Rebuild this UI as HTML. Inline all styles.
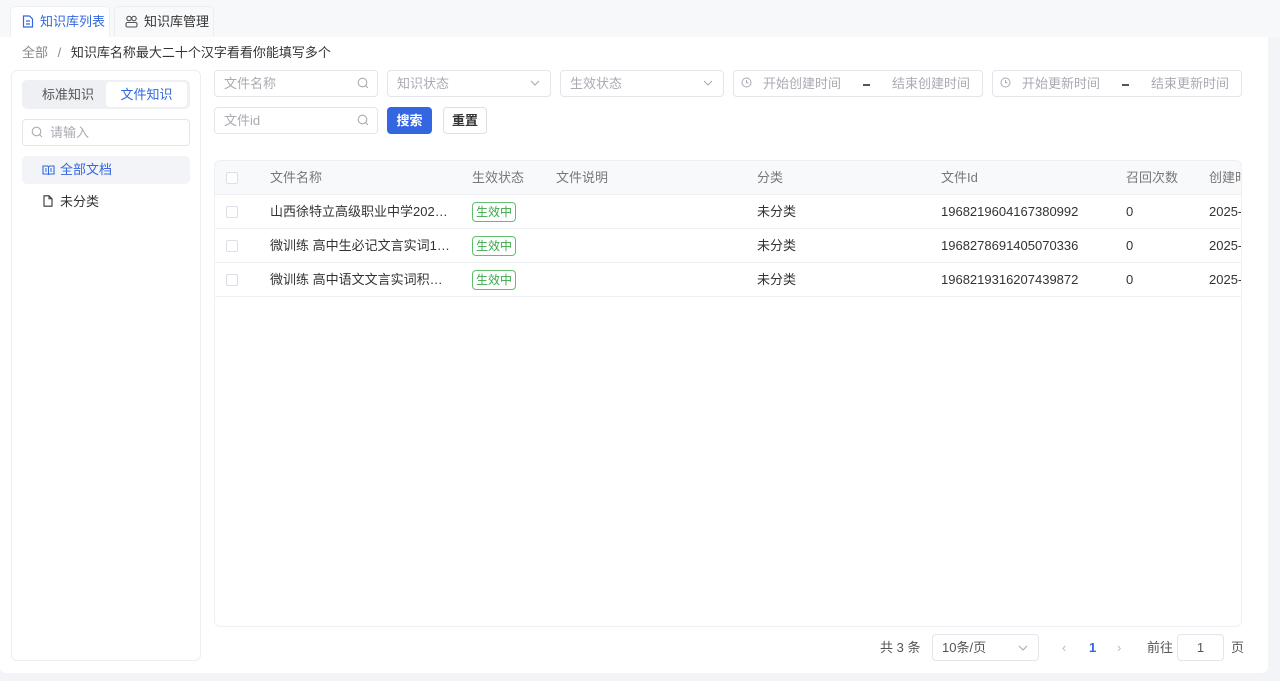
<!DOCTYPE html>
<html><head><meta charset="utf-8"><style>
*{box-sizing:border-box;margin:0;padding:0}
body{width:1280px;height:681px;overflow:hidden;background:#f3f4f7;font-family:"Liberation Sans","Noto Sans CJK SC",sans-serif;font-size:13px;color:#333;position:relative}
.a{position:absolute}
.inp{position:absolute;height:27px;border:1px solid #e3e5ea;border-radius:4px;background:#fff;color:#a8abb2;font-size:13px;line-height:25px;padding-left:9px}
.row{position:absolute;left:0;width:1027px;height:34px;border-bottom:1px solid #eef0f3}
.cell{position:absolute;top:0;line-height:34px;white-space:nowrap}
.nm{width:182px;overflow:hidden;text-overflow:ellipsis}
.cb{position:absolute;left:11px;top:11px;width:12px;height:12px;border:1px solid #dcdfe6;border-radius:2px;background:#fff}
.tag{position:absolute;left:257px;top:7px;width:44px;height:20px;border:1px solid #5fbf6b;border-radius:4px;color:#3aa84a;font-size:12px;line-height:18px;text-align:center}
.dash{display:inline-block;width:7px;height:2px;background:#555;vertical-align:middle;margin:0 22px}
</style></head><body>
<div class="a" style="left:0;top:0;width:1280px;height:37px;background:#f7f8fa"></div>
<div class="a" style="left:10px;top:6px;width:100px;height:32px;background:#fff;border:1px solid #eceef2;border-bottom:none;border-radius:5px 5px 0 0;color:#3366e0;line-height:30px;padding-left:29px">知识库列表</div>
<svg class="a" style="left:22px;top:15px" width="12" height="13" viewBox="0 0 12 13"><path d="M1.5 1h6l3 3v8h-9z" fill="none" stroke="#3366e0" stroke-width="1.2"/><path d="M4 6h4M4 9h4" stroke="#3366e0" stroke-width="1.2"/></svg>
<div class="a" style="left:114px;top:6px;width:100px;height:31px;background:#f8f9fb;border:1px solid #eceef2;border-bottom:none;border-radius:5px 5px 0 0;color:#333;line-height:30px;padding-left:29px">知识库管理</div>
<svg class="a" style="left:125px;top:15px" width="13" height="13" viewBox="0 0 13 13"><circle cx="4" cy="3.5" r="2.2" fill="none" stroke="#555" stroke-width="1.1"/><circle cx="9" cy="3.5" r="2.2" fill="none" stroke="#555" stroke-width="1.1"/><rect x="1" y="7.5" width="11" height="4.5" rx="1.5" fill="none" stroke="#555" stroke-width="1.1"/></svg>

<div class="a" style="left:0;top:37px;width:1268px;height:636px;background:#fff;border-radius:0 0 6px 6px"></div>
<div class="a" style="left:22px;top:45px;line-height:16px;color:#888">全部 <span style="margin:0 6px">/</span> <span style="color:#333">知识库名称最大二十个汉字看看你能填写多个</span></div>

<div class="a" style="left:11px;top:70px;width:190px;height:591px;border:1px solid #eceef2;border-radius:6px"></div>
<div class="a" style="left:22px;top:80px;width:168px;height:29px;background:#eef0f3;border-radius:5px"></div>
<div class="a" style="left:42px;top:80px;line-height:29px;color:#555">标准知识</div>
<div class="a" style="left:106px;top:82px;width:81px;height:25px;background:#fff;border-radius:4px;color:#3366e0;line-height:25px;text-align:center">文件知识</div>
<div class="inp" style="left:22px;top:119px;width:168px;padding-left:27px">请输入</div>
<svg class="a" style="left:31px;top:126px" width="12" height="12" viewBox="0 0 12 12"><circle cx="5.5" cy="5.5" r="4.3" fill="none" stroke="#a8abb2" stroke-width="1.1"/><path d="M8.6 8.6l2.4 2.4" stroke="#a8abb2" stroke-width="1.1"/></svg>
<div class="a" style="left:22px;top:156px;width:168px;height:28px;background:#f2f4f8;border-radius:5px;color:#3366e0;line-height:28px;padding-left:38px">全部文档</div>
<svg class="a" style="left:42px;top:165px" width="13" height="10" viewBox="0 0 13 10"><path d="M1 1h4.5l1 1 1-1H12v8H7.5l-1 .5-1-.5H1z" fill="none" stroke="#3366e0" stroke-width="1.1"/><path d="M6.5 2v7M3 4h2M3 6h2M8 4h2M8 6h2" stroke="#3366e0" stroke-width="1"/></svg>
<div class="a" style="left:60px;top:193px;line-height:17px;color:#333">未分类</div>
<svg class="a" style="left:43px;top:195px" width="10" height="12" viewBox="0 0 10 12"><path d="M1 .8h5l3 3v7.4H1z" fill="none" stroke="#333" stroke-width="1.1"/><path d="M6 .8v3h3" fill="none" stroke="#333" stroke-width="1"/></svg>

<!-- filters -->
<div class="inp" style="left:214px;top:70px;width:164px">文件名称</div>
<div class="inp" style="left:387px;top:70px;width:164px">知识状态</div>
<div class="inp" style="left:560px;top:70px;width:164px">生效状态</div>
<div class="inp" style="left:733px;top:70px;width:250px;padding-left:29px">开始创建时间<span class="dash"></span>结束创建时间</div>
<div class="inp" style="left:992px;top:70px;width:250px;padding-left:29px">开始更新时间<span class="dash"></span>结束更新时间</div>
<svg class="a" style="left:357px;top:77px" width="12" height="12" viewBox="0 0 12 12"><circle cx="5.5" cy="5.5" r="4.3" fill="none" stroke="#a8abb2" stroke-width="1.1"/><path d="M8.6 8.6l2.4 2.4" stroke="#a8abb2" stroke-width="1.1"/></svg>
<svg class="a" style="left:530px;top:80px" width="10" height="6" viewBox="0 0 10 6"><path d="M1 1l4 4 4-4" fill="none" stroke="#a8abb2" stroke-width="1.1"/></svg>
<svg class="a" style="left:703px;top:80px" width="10" height="6" viewBox="0 0 10 6"><path d="M1 1l4 4 4-4" fill="none" stroke="#a8abb2" stroke-width="1.1"/></svg>
<svg class="a" style="left:741px;top:77px" width="11" height="11" viewBox="0 0 11 11"><circle cx="5.5" cy="5.5" r="4.5" fill="none" stroke="#a8abb2"/><path d="M5.5 3v2.7h2" fill="none" stroke="#a8abb2"/></svg>
<svg class="a" style="left:1000px;top:77px" width="11" height="11" viewBox="0 0 11 11"><circle cx="5.5" cy="5.5" r="4.5" fill="none" stroke="#a8abb2"/><path d="M5.5 3v2.7h2" fill="none" stroke="#a8abb2"/></svg>
<div class="inp" style="left:214px;top:107px;width:164px">文件id</div>
<svg class="a" style="left:357px;top:114px" width="12" height="12" viewBox="0 0 12 12"><circle cx="5.5" cy="5.5" r="4.3" fill="none" stroke="#a8abb2" stroke-width="1.1"/><path d="M8.6 8.6l2.4 2.4" stroke="#a8abb2" stroke-width="1.1"/></svg>
<div class="a" style="left:387px;top:107px;width:45px;height:27px;background:#3366e0;border-radius:4px;color:#fff;font-weight:bold;line-height:27px;text-align:center">搜索</div>
<div class="a" style="left:443px;top:107px;width:44px;height:27px;border:1px solid #dcdfe6;border-radius:4px;color:#333;font-weight:bold;line-height:25px;text-align:center">重置</div>

<!-- table -->
<div class="a" style="left:214px;top:160px;width:1028px;height:467px;border:1px solid #eef0f3;border-radius:6px;overflow:hidden">
 <div class="row" style="top:0;background:#f8f9fb;color:#777">
  <div class="cb"></div>
  <div class="cell" style="left:55px">文件名称</div><div class="cell" style="left:257px">生效状态</div><div class="cell" style="left:341px">文件说明</div><div class="cell" style="left:542px">分类</div><div class="cell" style="left:726px">文件Id</div><div class="cell" style="left:911px">召回次数</div><div class="cell" style="left:994px">创建时间</div>
 </div>
 <div class="row" style="top:34px"><div class="cb"></div><div class="cell nm" style="left:55px">山西徐特立高级职业中学2025年…</div><div class="tag">生效中</div><div class="cell" style="left:542px">未分类</div><div class="cell" style="left:726px">1968219604167380992</div><div class="cell" style="left:911px">0</div><div class="cell" style="left:994px">2025-</div></div>
 <div class="row" style="top:68px"><div class="cb"></div><div class="cell nm" style="left:55px">微训练 高中生必记文言实词100…</div><div class="tag">生效中</div><div class="cell" style="left:542px">未分类</div><div class="cell" style="left:726px">1968278691405070336</div><div class="cell" style="left:911px">0</div><div class="cell" style="left:994px">2025-</div></div>
 <div class="row" style="top:102px"><div class="cb"></div><div class="cell nm" style="left:55px">微训练 高中语文文言实词积累与…</div><div class="tag">生效中</div><div class="cell" style="left:542px">未分类</div><div class="cell" style="left:726px">1968219316207439872</div><div class="cell" style="left:911px">0</div><div class="cell" style="left:994px">2025-</div></div>
</div>

<!-- pagination -->
<div class="a" style="left:880px;top:639px;line-height:17px;color:#555">共 3 条</div>
<div class="inp" style="left:932px;top:634px;width:107px;color:#555">10条/页</div>
<svg class="a" style="left:1018px;top:645px" width="10" height="6" viewBox="0 0 10 6"><path d="M1 1l4 4 4-4" fill="none" stroke="#a8abb2" stroke-width="1.1"/></svg>
<div class="a" style="left:1062px;top:639px;line-height:17px;color:#bbb">‹</div>
<div class="a" style="left:1089px;top:639px;line-height:17px;color:#3366e0;font-weight:bold">1</div>
<div class="a" style="left:1117px;top:639px;line-height:17px;color:#bbb">›</div>
<div class="a" style="left:1147px;top:639px;line-height:17px;color:#555">前往</div>
<div class="inp" style="left:1177px;top:634px;width:47px;color:#555;text-align:center;padding:0">1</div>
<div class="a" style="left:1231px;top:639px;line-height:17px;color:#555">页</div>
</body></html>
